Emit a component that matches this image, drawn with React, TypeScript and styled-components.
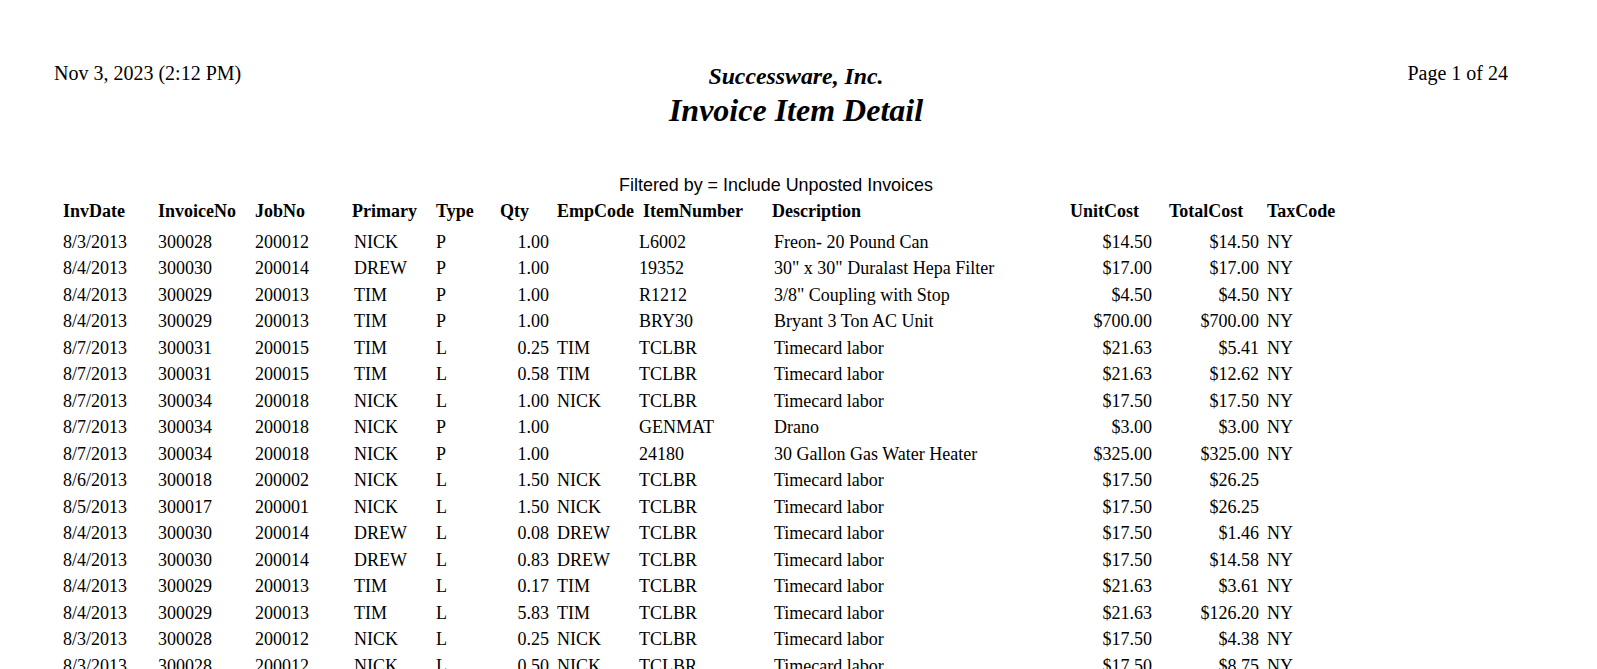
import React from "react";
import styled, { createGlobalStyle } from "styled-components";

const GlobalStyle = createGlobalStyle`
  html, body { margin: 0; padding: 0; background: #ffffff; }
  body { font-family: "Liberation Serif", "Times New Roman", serif; color: #000; }
`;

type Align = "left" | "right";
interface Col {
  key: string;
  label: string;
  width: string;
  align: Align;
  headPad: number;
  cellPad: number;
}

const columns: Col[] = [
  { key: "date", label: "InvDate", width: "95px", align: "left", headPad: 0, cellPad: 0 },
  { key: "inv", label: "InvoiceNo", width: "97px", align: "left", headPad: 0, cellPad: 0 },
  { key: "job", label: "JobNo", width: "97px", align: "left", headPad: 0, cellPad: 0 },
  { key: "primary", label: "Primary", width: "84px", align: "left", headPad: 0, cellPad: 2 },
  { key: "type", label: "Type", width: "64px", align: "left", headPad: 0, cellPad: 0 },
  { key: "qty", label: "Qty", width: "57px", align: "right", headPad: 0, cellPad: 8 },
  { key: "emp", label: "EmpCode", width: "82px", align: "left", headPad: 0, cellPad: 0 },
  { key: "item", label: "ItemNumber", width: "133px", align: "left", headPad: 4, cellPad: 0 },
  { key: "desc", label: "Description", width: "298px", align: "left", headPad: 0, cellPad: 2 },
  { key: "unit", label: "UnitCost", width: "90px", align: "right", headPad: 0, cellPad: 8 },
  { key: "total", label: "TotalCost", width: "104px", align: "right", headPad: 9, cellPad: 5 },
  { key: "tax", label: "TaxCode", width: "1fr", align: "left", headPad: 3, cellPad: 3 },
];

const gridTemplate = columns.map((c) => c.width).join(" ");

type RowData = string[];

const rows: RowData[] = [
  ["8/3/2013", "300028", "200012", "NICK", "P", "1.00", "", "L6002", "Freon- 20 Pound Can", "$14.50", "$14.50", "NY"],
  ["8/4/2013", "300030", "200014", "DREW", "P", "1.00", "", "19352", "30\" x 30\" Duralast Hepa Filter", "$17.00", "$17.00", "NY"],
  ["8/4/2013", "300029", "200013", "TIM", "P", "1.00", "", "R1212", "3/8\" Coupling with Stop", "$4.50", "$4.50", "NY"],
  ["8/4/2013", "300029", "200013", "TIM", "P", "1.00", "", "BRY30", "Bryant 3 Ton AC Unit", "$700.00", "$700.00", "NY"],
  ["8/7/2013", "300031", "200015", "TIM", "L", "0.25", "TIM", "TCLBR", "Timecard labor", "$21.63", "$5.41", "NY"],
  ["8/7/2013", "300031", "200015", "TIM", "L", "0.58", "TIM", "TCLBR", "Timecard labor", "$21.63", "$12.62", "NY"],
  ["8/7/2013", "300034", "200018", "NICK", "L", "1.00", "NICK", "TCLBR", "Timecard labor", "$17.50", "$17.50", "NY"],
  ["8/7/2013", "300034", "200018", "NICK", "P", "1.00", "", "GENMAT", "Drano", "$3.00", "$3.00", "NY"],
  ["8/7/2013", "300034", "200018", "NICK", "P", "1.00", "", "24180", "30 Gallon Gas Water Heater", "$325.00", "$325.00", "NY"],
  ["8/6/2013", "300018", "200002", "NICK", "L", "1.50", "NICK", "TCLBR", "Timecard labor", "$17.50", "$26.25", ""],
  ["8/5/2013", "300017", "200001", "NICK", "L", "1.50", "NICK", "TCLBR", "Timecard labor", "$17.50", "$26.25", ""],
  ["8/4/2013", "300030", "200014", "DREW", "L", "0.08", "DREW", "TCLBR", "Timecard labor", "$17.50", "$1.46", "NY"],
  ["8/4/2013", "300030", "200014", "DREW", "L", "0.83", "DREW", "TCLBR", "Timecard labor", "$17.50", "$14.58", "NY"],
  ["8/4/2013", "300029", "200013", "TIM", "L", "0.17", "TIM", "TCLBR", "Timecard labor", "$21.63", "$3.61", "NY"],
  ["8/4/2013", "300029", "200013", "TIM", "L", "5.83", "TIM", "TCLBR", "Timecard labor", "$21.63", "$126.20", "NY"],
  ["8/3/2013", "300028", "200012", "NICK", "L", "0.25", "NICK", "TCLBR", "Timecard labor", "$17.50", "$4.38", "NY"],
  ["8/3/2013", "300028", "200012", "NICK", "L", "0.50", "NICK", "TCLBR", "Timecard labor", "$17.50", "$8.75", "NY"],
];

const Page = styled.div`
  width: 1597px;
  height: 669px;
  overflow: hidden;
  box-sizing: border-box;
`;

const ReportHeader = styled.header`
  display: grid;
  grid-template-columns: 1fr auto 1fr;
  align-items: start;
  padding: 61px 5px 0 0;
`;

const PrintDate = styled.div`
  justify-self: start;
  margin-left: 54px;
  font-size: 20px;
  line-height: 24px;
  white-space: nowrap;
`;

const PageNumber = styled.div`
  justify-self: end;
  margin-right: 84px;
  font-size: 20px;
  line-height: 24px;
  white-space: nowrap;
`;

const TitleBlock = styled.div`
  display: flex;
  flex-direction: column;
  align-items: center;
  padding-top: 2px;
  font-weight: bold;
  font-style: italic;
`;

const Company = styled.div`
  font-size: 23.8px;
  line-height: 27px;
  white-space: nowrap;
`;

const ReportTitle = styled.h1`
  margin: 0;
  font-size: 32px;
  line-height: 40px;
  font-weight: bold;
  white-space: nowrap;
`;

const FilterLine = styled.div`
  margin-top: 45px;
  text-align: center;
  font-family: "Liberation Sans", Arial, sans-serif;
  font-size: 17.9px;
  line-height: 20px;
  white-space: nowrap;
  padding-right: 45px;
`;

const Table = styled.div`
  margin-top: 2.75px;
  padding-left: 63px;
`;

const Row = styled.div<{ $head?: boolean }>`
  display: grid;
  grid-template-columns: ${gridTemplate};
  font-size: 18px;
  line-height: 26.5px;
  font-weight: ${(p) => (p.$head ? "bold" : "normal")};
  margin-bottom: ${(p) => (p.$head ? "4.5px" : "0")};
`;

const HeadCell = styled.div<{ $pad: number }>`
  padding-left: ${(p) => p.$pad}px;
  white-space: nowrap;
`;

const Cell = styled.div<{ $align: Align; $pad: number }>`
  text-align: ${(p) => p.$align};
  padding-left: ${(p) => (p.$align === "left" ? p.$pad : 0)}px;
  padding-right: ${(p) => (p.$align === "right" ? p.$pad : 0)}px;
  white-space: nowrap;
`;

export default function App() {
  return (
    <>
      <GlobalStyle />
      <Page>
        <ReportHeader>
          <PrintDate>Nov 3, 2023 (2:12 PM)</PrintDate>
          <TitleBlock>
            <Company>Successware, Inc.</Company>
            <ReportTitle>Invoice Item Detail</ReportTitle>
          </TitleBlock>
          <PageNumber>Page 1 of 24</PageNumber>
        </ReportHeader>
        <FilterLine>Filtered by = Include Unposted Invoices</FilterLine>
        <Table>
          <Row $head>
            {columns.map((c) => (
              <HeadCell key={c.key} $pad={c.headPad}>
                {c.label}
              </HeadCell>
            ))}
          </Row>
          {rows.map((r, i) => (
            <Row key={i}>
              {columns.map((c, j) => (
                <Cell key={c.key} $align={c.align} $pad={c.cellPad}>
                  {r[j]}
                </Cell>
              ))}
            </Row>
          ))}
        </Table>
      </Page>
    </>
  );
}
